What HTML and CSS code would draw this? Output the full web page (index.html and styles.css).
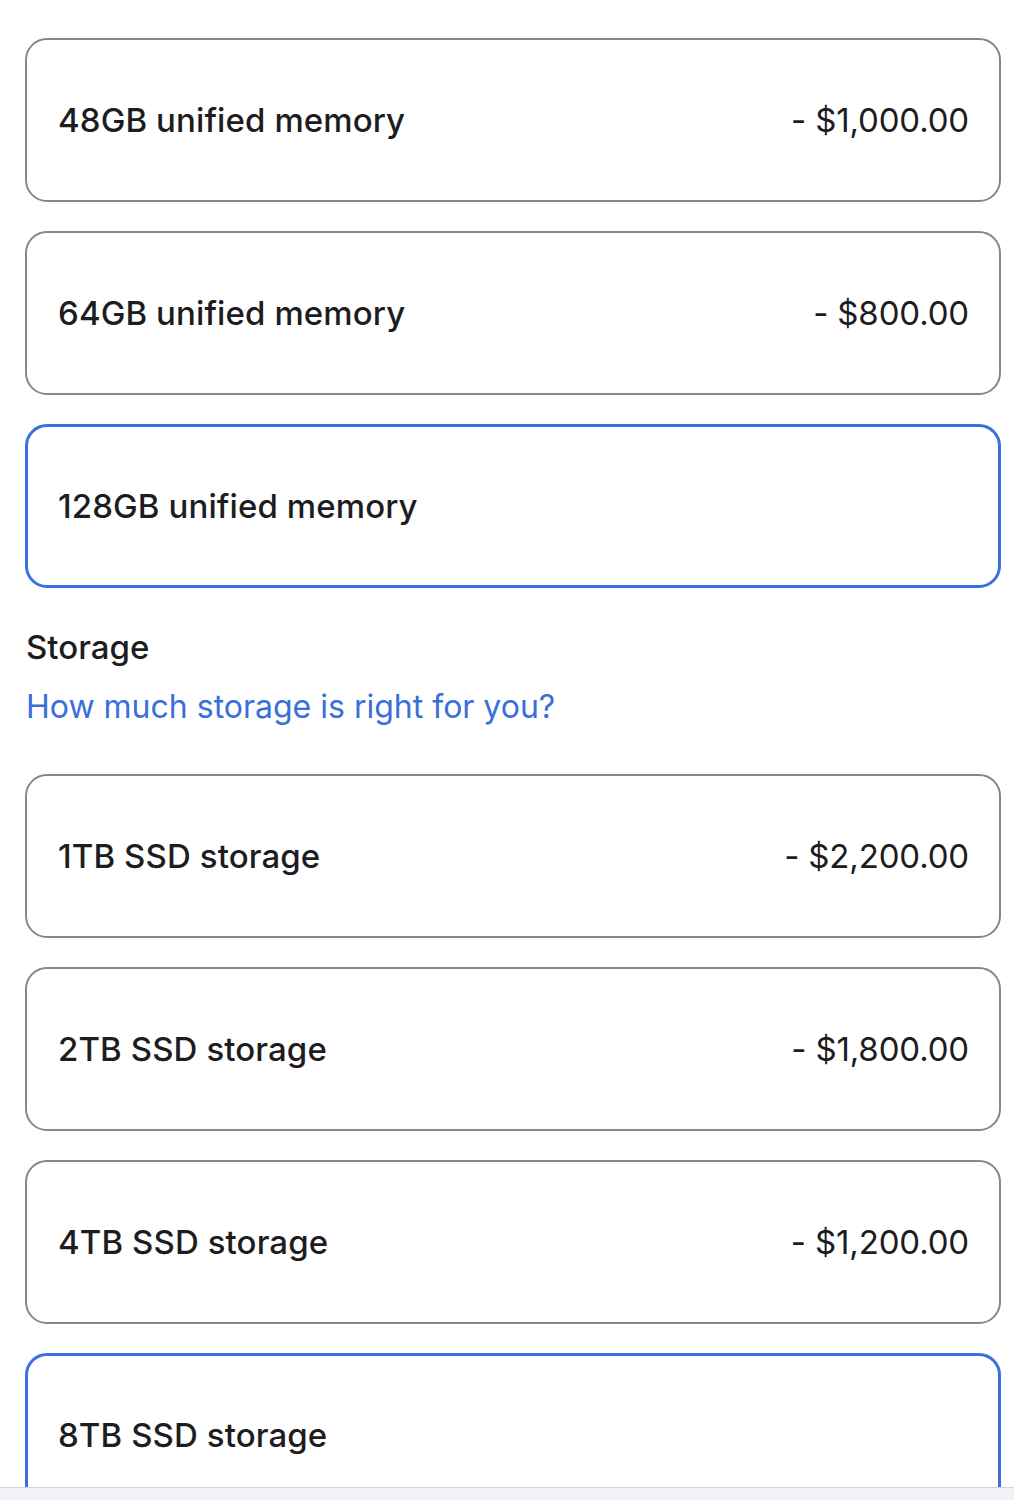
FILE: index.html
```html
<!DOCTYPE html>
<html lang="en">
<head>
<meta charset="utf-8">
<title>Configure</title>
<link rel="stylesheet" href="styles.css">
</head>
<body>
<main class="page">
  <div class="options">
    <div class="option"><span class="label">48GB unified memory</span><span class="price">- $1,000.00</span></div>
    <div class="option"><span class="label">64GB unified memory</span><span class="price">- $800.00</span></div>
    <div class="option selected"><span class="label">128GB unified memory</span></div>
  </div>
  <section class="group">
    <h2 class="group-title">Storage</h2>
    <a class="group-link" href="#">How much storage is right for you?</a>
  </section>
  <div class="options">
    <div class="option"><span class="label">1TB SSD storage</span><span class="price">- $2,200.00</span></div>
    <div class="option"><span class="label">2TB SSD storage</span><span class="price">- $1,800.00</span></div>
    <div class="option"><span class="label">4TB SSD storage</span><span class="price">- $1,200.00</span></div>
    <div class="option selected"><span class="label">8TB SSD storage</span></div>
  </div>
</main>
<div class="toolbar"></div>
</body>
</html>
```
FILE: styles.css
```css
html, body {
  margin: 0;
  padding: 0;
  background: #ffffff;
}
body {
  font-family: Inter, "Noto Sans", "Liberation Sans", sans-serif;
  color: #1d1d1f;
}
.page {
  padding: 38px 13px 0 25px;
}
.options {
  display: flex;
  flex-direction: column;
  gap: 29px;
}
.option {
  box-sizing: border-box;
  height: 164px;
  border: 2px solid #86868b;
  border-radius: 22px;
  display: flex;
  align-items: center;
  justify-content: space-between;
  padding: 0 30px 0 31px;
}
.option.selected {
  border: 3px solid #3a71e0;
  padding: 0 29px 0 30px;
}
.label {
  font-size: 33px;
  font-weight: 500;
  letter-spacing: 0.1px;
}
.price {
  font-size: 33px;
  font-weight: 400;
  letter-spacing: -0.15px;
}
.group {
  padding: 35px 0 46px 1px;
}
.group-title {
  margin: 0;
  font-size: 33px;
  font-weight: 500;
  line-height: 48px;
}
.group-link {
  display: block;
  margin-top: 15px;
  font-size: 32px;
  line-height: 42px;
  color: #3a6fd8;
  text-decoration: none;
}
.toolbar {
  position: fixed;
  left: 0;
  right: 0;
  bottom: 0;
  height: 12px;
  background: #f2f2f7;
  border-top: 1px solid #d1d1d6;
}
```
